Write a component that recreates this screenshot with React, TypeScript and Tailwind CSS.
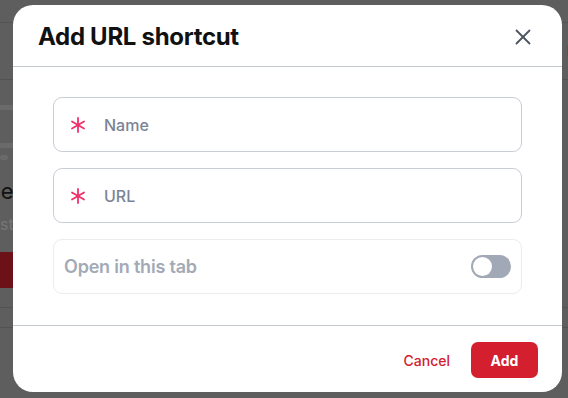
import React, { useState } from 'react';
import { X } from 'lucide-react';

function Asterisk() {
  return (
    <svg width="16" height="16" viewBox="0 0 16 16" className="shrink-0" fill="none" stroke="#f0306a" strokeWidth="1.8" strokeLinecap="round">
      <line x1="8" y1="1" x2="8" y2="15" />
      <line x1="2" y1="4.5" x2="14" y2="11.5" />
      <line x1="2" y1="11.5" x2="14" y2="4.5" />
    </svg>
  );
}

function Field({ label }: { label: string }) {
  return (
    <label className="flex items-center h-[55px] rounded-[9px] border border-[#c9cdd4] pl-4 pr-4 gap-[18px]">
      <Asterisk />
      <input
        placeholder={label}
        className="flex-1 bg-transparent outline-none text-[16px] font-medium text-[#374151] placeholder:text-[#7b8496]"
      />
    </label>
  );
}

export default function App() {
  const [sameTab, setSameTab] = useState(false);

  return (
    <div className="relative w-[568px] h-[398px] overflow-hidden bg-[#5e5e5e]" style={{ fontFamily: 'Inter, "Noto Sans", sans-serif' }}>
      {/* dimmed page behind */}
      <div className="flex flex-col h-full">
        <div className="h-[23px] border-b border-[#535353]" />
        <div className="h-[57px] border-b border-[#535353] flex justify-end">
          <span className="text-[20px] text-[#111] mt-[12px] -mr-[6px]">r</span>
        </div>
        <div className="h-[25px]" />
        <div className="h-[5px] w-[30px] bg-[#6a6a6a]" />
        <div className="h-[33px]" />
        <div className="h-[5px] w-[30px] bg-[#6a6a6a]" />
        <div className="h-[7px]" />
        <div className="h-[5px] w-[8px] rounded bg-[#6a6a6a]" />
        <div className="text-[22px] text-[#111] mt-[20px] -ml-[12px] leading-none">ee</div>
        <div className="text-[16px] text-[#777] mt-[14px] -ml-[6px] leading-none">rst</div>
        <div className="h-[36px] w-[13px] bg-[#6b1117] mt-[20px]" />
        <div className="h-[20px] border-b border-[#535353]" />
        <div className="h-[20px] border-b border-[#535353]" />
      </div>

      {/* modal */}
      <div className="absolute left-[13px] top-[5px] w-[549px] h-[387px] bg-white rounded-[20px] flex flex-col">
        <div className="h-[62px] flex items-center justify-between pl-[25px] pr-[26px] border-b border-[#c3c8d0] pt-[2px]">
          <h2 className="text-[24px] font-bold text-[#111] tracking-[-0.3px]">Add URL shortcut</h2>
          <X className="w-[26px] h-[26px] text-[#4b5563]" strokeWidth={1.7} />
        </div>

        <div className="flex flex-col gap-4 px-[40px] pt-[30px] h-[258px]">
          <Field label="Name" />
          <Field label="URL" />
          <div className="flex items-center justify-between h-[55px] rounded-[9px] border border-[#ececee] pl-[10px] pr-[10px]">
            <span className="text-[18px] font-semibold text-[#a3aab6] tracking-[-0.2px]">Open in this tab</span>
            <button
              onClick={() => setSameTab(!sameTab)}
              className={`w-[40px] h-[23px] rounded-full p-[2px] flex ${sameTab ? 'justify-end bg-[#d41f2e]' : 'justify-start bg-[#a1a9b7]'}`}
            >
              <span className="w-[19px] h-[19px] rounded-full bg-white" />
            </button>
          </div>
        </div>

        <div className="flex-1 border-t border-[#c3c8d0] flex items-center justify-end gap-[21px] pr-[24px] pt-[2px]">
          <button className="text-[14px] font-medium text-[#d3202f]">Cancel</button>
          <button className="w-[67px] h-[36px] rounded-[7px] bg-[#d41f2e] text-white text-[14px] font-bold">Add</button>
        </div>
      </div>
    </div>
  );
}
